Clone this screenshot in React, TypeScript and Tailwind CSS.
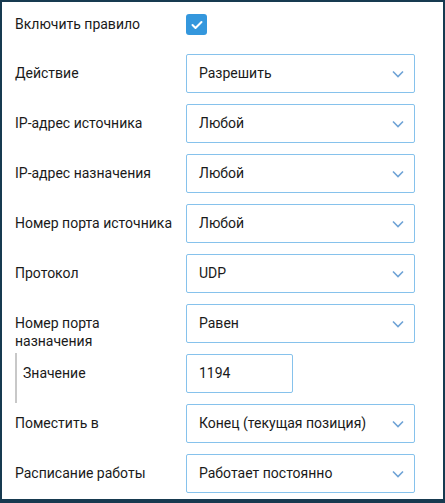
import React from 'react'

const font = { fontFamily: 'Roboto, "Noto Sans", Arial, sans-serif' }

function Chevron() {
  return (
    <svg width="12" height="8" viewBox="0 0 12 8" fill="none" className="shrink-0">
      <path d="M1 1.5L6 6.5L11 1.5" stroke="#6fa3d6" strokeWidth="1.6" />
    </svg>
  )
}

function Select({ value }: { value: string }) {
  return (
    <div className="w-[229px] h-[39px] border border-[#86c2ec] rounded-[2px] flex items-center justify-between pl-[12px] pr-[10px] text-[14px] text-[#1a1a1a]">
      <span>{value}</span>
      <Chevron />
    </div>
  )
}

function Row({ label, value }: { label: string; value: string }) {
  return (
    <div className="flex items-center h-[39px] mb-[11px]">
      <div className="w-[171px] shrink-0 text-[14px] text-[#1a1a1a]">{label}</div>
      <Select value={value} />
    </div>
  )
}

export default function App() {
  return (
    <div className="w-[445px] h-[503px] bg-[#173a50] pt-[2px] pl-[2px]" style={font}>
      <div className="w-[441px] h-[497px] bg-white pl-[13px] pt-[3px]">
        {/* Enable rule */}
        <div className="flex items-center h-[39px] mb-[10px]">
          <div className="w-[171px] shrink-0 text-[14px] text-[#1a1a1a]">Включить правило</div>
          <div className="w-[21px] h-[21px] rounded-[3px] bg-[#3497dd] flex items-center justify-center">
            <svg width="12" height="10" viewBox="0 0 12 10" fill="none">
              <path d="M1.5 5L4.5 8L10.5 2" stroke="white" strokeWidth="2" strokeLinecap="round" strokeLinejoin="round" />
            </svg>
          </div>
        </div>

        <Row label="Действие" value="Разрешить" />
        <Row label="IP-адрес источника" value="Любой" />
        <Row label="IP-адрес назначения" value="Любой" />
        <Row label="Номер порта источника" value="Любой" />
        <Row label="Протокол" value="UDP" />

        {/* Destination port */}
        <div className="flex items-start h-[39px]">
          <div className="w-[171px] shrink-0 text-[14px] leading-[18px] text-[#1a1a1a] pt-[10px]">
            Номер порта
            <br />
            назначения
          </div>
          <Select value="Равен" />
        </div>

        {/* Value */}
        <div className="mt-[10px] h-[50px] border-l-2 border-[#c8c8c8] pl-[6px] pt-px">
          <div className="flex items-center h-[39px]">
            <div className="w-[163px] shrink-0 text-[14px] text-[#1a1a1a]">Значение</div>
            <div className="w-[107px] h-[39px] border border-[#86c2ec] rounded-[2px] flex items-center pl-[12px] text-[14px] text-[#1a1a1a]">
              1194
            </div>
          </div>
        </div>

        <div className="mt-px">
          <Row label="Поместить в" value="Конец (текущая позиция)" />
          <Row label="Расписание работы" value="Работает постоянно" />
        </div>
      </div>
    </div>
  )
}
